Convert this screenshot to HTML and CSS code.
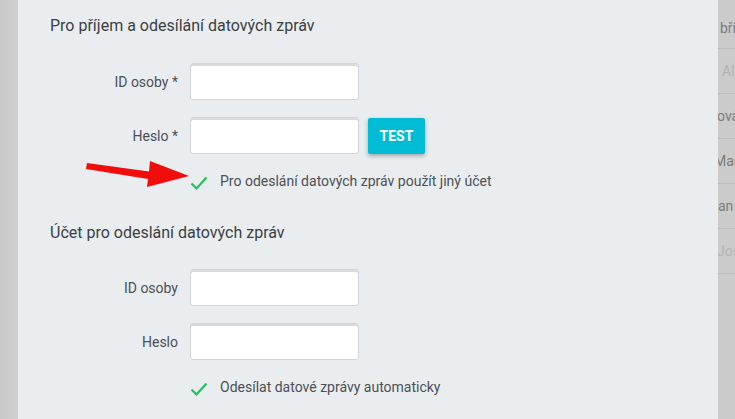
FILE: index.html
```html
<!DOCTYPE html>
<html lang="cs">
<head>
<meta charset="utf-8">
<title>Datové schránky</title>
<link rel="stylesheet" href="styles.css">
</head>
<body>
<div class="page">
  <div class="strip"></div>
  <div class="modal">
    <h2 class="section-title">Pro příjem a odesílání datových zpráv</h2>
    <div class="form">
      <label class="lbl">ID osoby *</label>
      <div class="field"><input class="inp" type="text"></div>
      <label class="lbl">Heslo *</label>
      <div class="field"><input class="inp" type="password"><button class="btn-test">TEST</button></div>
      <div class="lbl"></div>
      <div class="check">
        <svg class="tick" width="18" height="14" viewBox="0 0 18 14"><path d="M1.5 7.5 L6.5 12.5 L16.5 1.5" fill="none" stroke="#1ec25a" stroke-width="2.2"/></svg>
        <span>Pro odeslání datových zpráv použít jiný účet</span>
      </div>
    </div>
    <h2 class="section-title second">Účet pro odeslání datových zpráv</h2>
    <div class="form">
      <label class="lbl">ID osoby</label>
      <div class="field"><input class="inp" type="text"></div>
      <label class="lbl">Heslo</label>
      <div class="field"><input class="inp" type="password"></div>
      <div class="lbl"></div>
      <div class="check">
        <svg class="tick" width="18" height="14" viewBox="0 0 18 14"><path d="M1.5 7.5 L6.5 12.5 L16.5 1.5" fill="none" stroke="#1ec25a" stroke-width="2.2"/></svg>
        <span>Odesílat datové zprávy automaticky</span>
      </div>
    </div>
    <svg class="arrow" width="110" height="30" viewBox="0 0 110 30"><path d="M2 3 L64 11.5 L65 1 L104 16 L62 27 L63 19 L1 9 Z" fill="#f20d0d"/></svg>
  </div>
  <div class="backdrop">
    <div class="row"><span class="t off1">bří</span></div>
    <div class="row"><span class="t light off2">Al</span></div>
    <div class="row"><span class="t off0">ová</span></div>
    <div class="row"><span class="t offm">Mar</span></div>
    <div class="row"><span class="t offa">an T</span></div>
    <div class="row"><span class="t light offj">Jos</span></div>
  </div>
</div>
</body>
</html>
```
FILE: styles.css
```css
* { box-sizing: border-box; }
html, body { margin: 0; padding: 0; }
body {
  width: 735px;
  height: 419px;
  overflow: hidden;
  background: #cbcbcb;
  font-family: Roboto, "Noto Sans", sans-serif;
}
.page {
  display: flex;
  height: 419px;
}
.strip {
  width: 18px;
  background: linear-gradient(to right, #c9c9c9, #d0d0d0);
}
.modal {
  position: relative;
  width: 700px;
  background: #eaedf0;
  padding-top: 16px;
}
.section-title {
  margin: 0 0 0 32px;
  font-size: 16px;
  line-height: 20px;
  font-weight: 400;
  color: #3b3f43;
}
.section-title.second { margin-top: 32px; }
.form {
  display: grid;
  grid-template-columns: 160px auto;
  column-gap: 12px;
  row-gap: 17px;
  margin-top: 27px;
  align-items: center;
}
.second + .form { margin-top: 26px; }
.lbl {
  text-align: right;
  font-size: 14px;
  color: #4b5055;
}
.field {
  display: flex;
  align-items: center;
}
.inp {
  width: 169px;
  height: 37px;
  margin: 0;
  background: #fff;
  border: 1px solid #cfd5da;
  border-radius: 3px;
  box-shadow: inset 0 2px 0 #d8dadd;
}
.btn-test {
  margin-left: 9px;
  width: 57px;
  height: 36px;
  border: 0;
  border-radius: 2px;
  background: #00bcd4;
  color: #fff;
  font-family: Roboto, sans-serif;
  font-weight: 700;
  font-size: 14px;
  box-shadow: 0 2px 4px rgba(0,0,0,0.3);
  padding: 0;
}
.check {
  display: flex;
  align-items: center;
  height: 20px;
  font-size: 14px;
  color: #4b5055;
}
.tick { margin-right: 12px; margin-top: 3px; }
.arrow {
  position: absolute;
  left: 67px;
  top: 160px;
}
.backdrop {
  flex: 1;
  overflow: hidden;
  padding-top: 4px;
}
.row {
  height: 45px;
  border-bottom: 1px solid #bdbdbd;
  display: flex;
  align-items: center;
  white-space: nowrap;
  font-size: 14px;
  color: #7d7d7d;
}
.row:first-child { border-top: 1px solid #bdbdbd; margin-top: -46px; height: 91px; align-items: flex-end; padding-bottom: 12px; }
.t.light { color: #b3b3b3; }
.off1 { margin-left: 2px; }
.off2 { margin-left: 4px; }
.off0 { margin-left: -1px; }
.offm { margin-left: -4px; }
.offa { margin-left: 0; }
.offj { margin-left: -1px; }
```
